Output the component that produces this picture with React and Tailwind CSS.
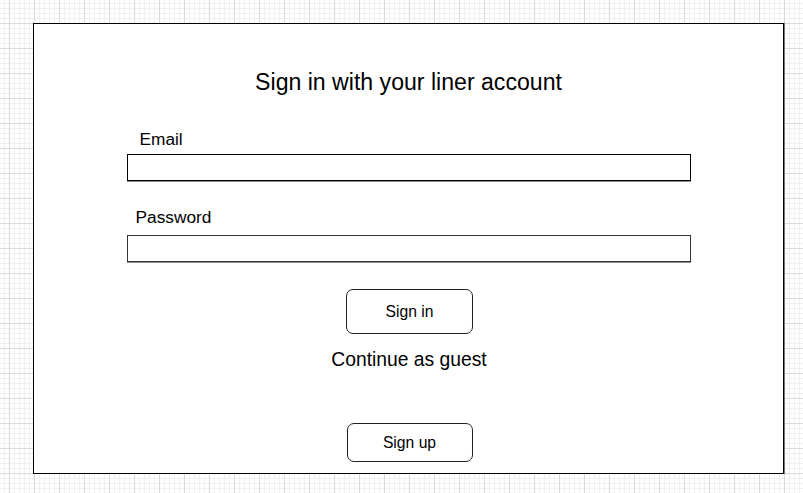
export default function App() {
  return (
    <div className="h-[493px] w-full overflow-hidden bg-white bg-[linear-gradient(to_right,#dadada_1px,transparent_1px),linear-gradient(to_bottom,#dadada_1px,transparent_1px),linear-gradient(to_right,#f0f0f0_1px,transparent_1px),linear-gradient(to_bottom,#f0f0f0_1px,transparent_1px)] bg-[size:25px_25px,25px_25px,5px_5px,5px_5px] bg-[position:9px_23px,9px_23px,4px_3px,4px_3px] pl-[33px] pt-[23px] font-['Liberation_Sans',Arial,sans-serif] text-black">
      <div className="flex h-[451px] w-[751px] flex-col items-center border border-black bg-white shadow-[1px_0_0_#777]">
        <h1 className="mt-[44px] text-[23.1px] leading-[28px] font-normal">
          Sign in with your liner account
        </h1>
        <div className="mt-[33px] w-[564px]">
          <label className="block pl-[13px] text-[17.3px] leading-[20px]">Email</label>
          <div className="mt-[5px] h-[27px] w-full border border-black bg-white shadow-[0_1px_0_#888]" />
          <label className="mt-[26px] block pl-[9px] text-[17.3px] leading-[20px]">Password</label>
          <div className="mt-[8px] h-[27px] w-full border border-[#333] bg-white shadow-[0_1px_0_#888]" />
        </div>
        <button className="ml-[2px] mt-[27px] flex h-[45px] w-[127px] items-center justify-center rounded-[7px] border border-[#222] bg-white text-[15.7px]">
          Sign in
        </button>
        <div className="ml-[1px] mt-[15px] text-[19.3px] leading-[22px]">Continue as guest</div>
        <button className="ml-[2px] mt-[52px] flex h-[39px] w-[126px] items-center justify-center rounded-[7px] border border-[#222] bg-white text-[15.7px]">
          Sign up
        </button>
      </div>
    </div>
  );
}
